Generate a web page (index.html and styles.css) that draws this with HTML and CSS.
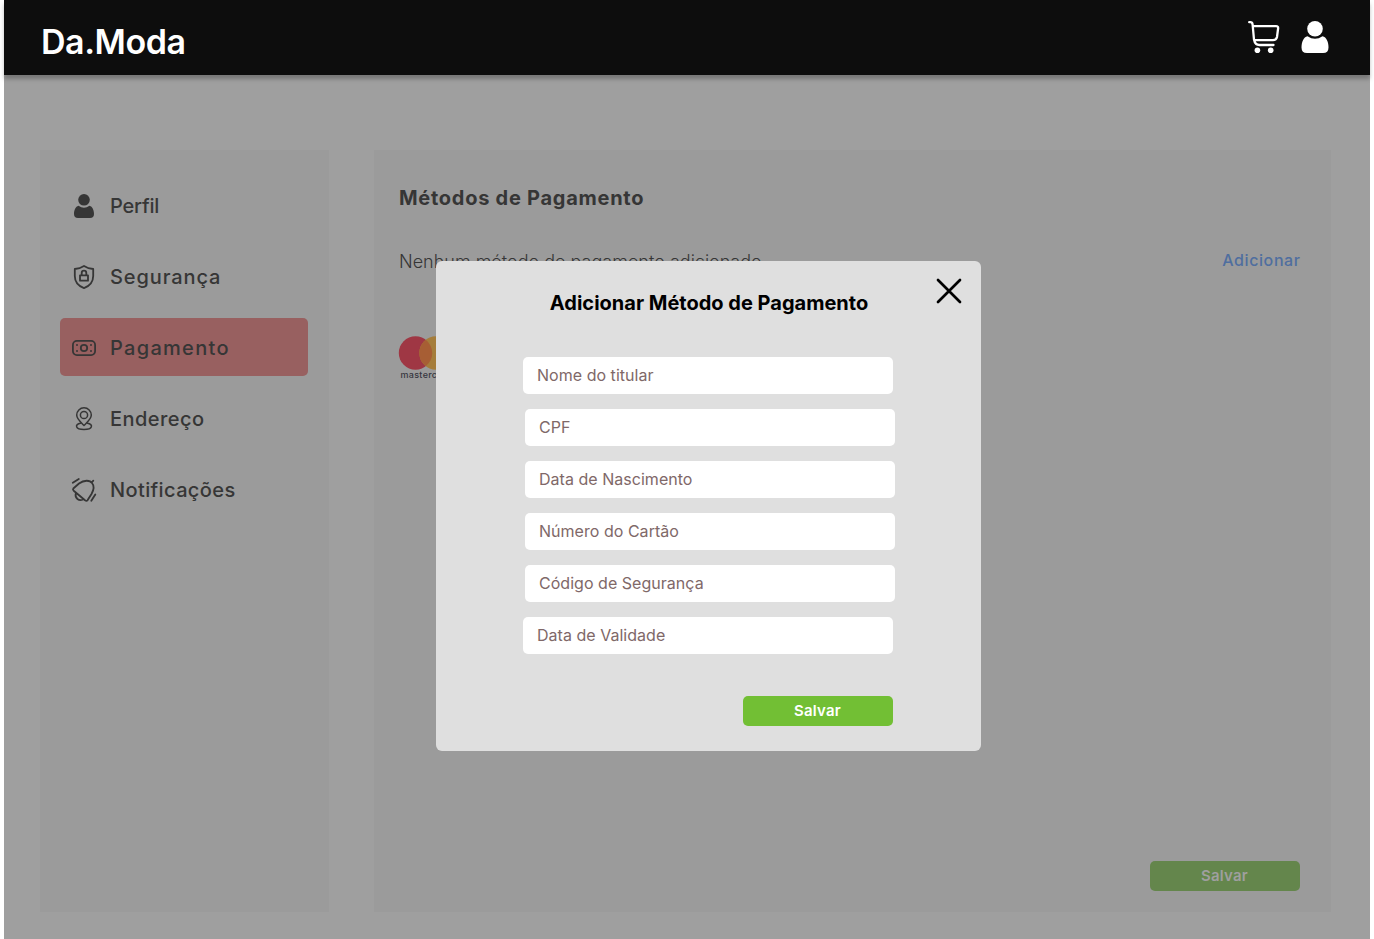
FILE: index.html
```html
<!DOCTYPE html>
<html lang="pt-BR">
<head>
<meta charset="utf-8">
<title>Da.Moda</title>
<link rel="stylesheet" href="styles.css">
</head>
<body>
<div class="page">
  <header class="topbar">
    <div class="logo">Da.Moda</div>
    <div class="actions">
      <svg class="cart" viewBox="0 0 32 33" width="32" height="33" fill="none" stroke="#fff" stroke-width="2.300" stroke-linecap="round" stroke-linejoin="round"><path d="M1.200 2.200H2.300Q4.300 2.200 4.600 4.500L6 19.500Q7 25 11.500 25H25.500M5.500 6.200H28Q30.500 6.200 30.100 8.500L29 17Q28.300 20.200 25 20.200H7"/><circle cx="9.400" cy="30.200" r="2.800" fill="#fff" stroke="none"/><circle cx="22.700" cy="30.200" r="2.800" fill="#fff" stroke="none"/></svg>
      <svg class="user" viewBox="0 0 28 33" width="28" height="33" fill="#fff"><circle cx="14" cy="8.700" r="7.800"/><path d="M6.500 16.200Q14 21.500 21.500 16.200C25.500 17 27.500 22 27.500 27.500Q27.500 33 22 33H6Q.5 33 .5 27.500C.5 22 2.500 17 6.500 16.200Z"/></svg>
    </div>
  </header>
  <main class="content">
    <nav class="sidebar">
      <a class="item"><svg viewBox="0 0 24 24" width="24" height="24" fill="#363636"><circle cx="12" cy="5.800" r="5.800"/><path d="M6.500 11.700Q12 15.800 17.500 11.700C20.500 12.500 22 16 22 20Q22 24 18 24H6Q2 24 2 20C2 16 3.500 12.500 6.500 11.700Z"/></svg><span class="t-perfil">Perfil</span></a>
      <a class="item"><svg viewBox="0 0 24 24" width="24" height="24" class="line"><path d="M12 1C9 3 6 3.700 2.800 4V11C2.800 17 6 20.800 12 23.200C18 20.800 21.200 17 21.200 11V4C18 3.700 15 3 12 1Z"/><path d="M8 10.300H16V15.700H8ZM9.700 10V8A2.300 2.300 0 0 1 14.300 8V10"/></svg><span class="t-seg">Segurança</span></a>
      <a class="item active"><svg viewBox="0 0 24 24" width="24" height="24" class="line"><rect x=".9" y="4.900" width="22.200" height="14.200" rx="4"/><circle cx="12" cy="12" r="3.200"/><g fill="#363636" stroke="none"><circle cx="5" cy="9" r="1"/><circle cx="5" cy="15" r="1"/><circle cx="19" cy="9" r="1"/><circle cx="19" cy="15" r="1"/></g></svg><span class="t-pag">Pagamento</span></a>
      <a class="item"><svg viewBox="0 0 24 24" width="24" height="24" class="line thin"><path d="M12 18.500C9 15.500 4.700 12 4.700 8.100A7.300 7.300 0 0 1 19.300 8.100C19.300 12 15 15.500 12 18.500Z"/><circle cx="12" cy="8" r="3.600"/><path d="M8.500 16.300C2.500 17.200 3 22.500 12 22.500S21.500 17.200 15.500 16.300"/></svg><span class="t-end">Endereço</span></a>
      <a class="item"><svg viewBox="0 0 24 24" width="24" height="24" class="line"><path d="M1.300 10.500L7 5.500C12 1.800 18 2 20 5C22.500 8 21.800 12 19.500 16L15.500 22.300Q14.500 23.300 13 22.300L1.700 12.700Q.5 11.500 1.300 10.500ZM19.700 4.500L21.300 2.700M3.800 15.500C2.500 20 7 23.500 11 21.500M.8 4.800L6.800 1M19.300 22.800L23.300 16.500"/></svg><span class="t-not">Notificações</span></a>
    </nav>
    <section class="panel">
      <h1>Métodos de Pagamento</h1>
      <div class="row"><p>Nenhum método de pagamento adicionado</p><a class="add">Adicionar</a></div>
      <svg class="mc" viewBox="0 0 60 48" width="60" height="48"><circle cx="16.500" cy="17" r="16.700" fill="#9f3744"/><circle cx="37" cy="17" r="16.700" fill="#a57d3b"/><path d="M26.750 3.800A16.700 16.700 0 0 1 26.750 30.200A16.700 16.700 0 0 1 26.750 3.800Z" fill="#a75e34"/><text x="1.500" y="42" class="mct">mastercard</text></svg>
      <button class="save">Salvar</button>
    </section>
  </main>
  <div class="modal">
    <svg class="close" viewBox="0 0 26 26" width="26" height="26"><path d="M2 2L24 24M24 2L2 24"/></svg>
    <h2>Adicionar Método de Pagamento</h2>
    <form class="form">
      <div class="field edge">Nome do titular</div>
      <div class="field">CPF</div>
      <div class="field">Data de Nascimento</div>
      <div class="field">Número do Cartão</div>
      <div class="field">Código de Segurança</div>
      <div class="field edge">Data de Validade</div>
    </form>
    <button class="save">Salvar</button>
  </div>
</div>
</body>
</html>
```
FILE: styles.css
```css
* { box-sizing: border-box; }
body { margin: 0; background: #fff; font-family: Inter, "Liberation Sans", sans-serif; overflow: hidden; }
h1, h2, p { margin: 0; }
.page { position: relative; margin: 0 4px; height: 939px; background: #9f9f9f; display: flex; flex-direction: column; }
.topbar { position: relative; height: 75px; flex: none; background: #0d0d0d; box-shadow: 0 4px 4px rgba(0,0,0,.25); display: flex; justify-content: space-between; padding: 0 41px 0 37px; }
.logo { color: #fff; font-size: 34px; font-weight: 600; line-height: 40px; padding-top: 22px; letter-spacing: -.45px; white-space: nowrap; }
.actions { display: flex; gap: 21px; padding-top: 20px; }
.content { display: flex; gap: 45px; padding: 75px 39px 27px 36px; flex: 1; }
.sidebar { width: 289px; background: #9b9b9b; padding: 26px 21px 0 20px; display: flex; flex-direction: column; gap: 13px; }
.item { height: 58px; display: flex; align-items: center; gap: 14px; padding: 2px 0 0 12px; border-radius: 5px; color: #363636; font-size: 20px; font-weight: 500; white-space: nowrap; }
.item svg { overflow: visible; flex: none; }
.active { background: #986060; }
.t-perfil { letter-spacing: -.2px; }
.t-seg { letter-spacing: .9px; }
.t-pag { letter-spacing: 1.3px; }
.t-end { letter-spacing: .45px; }
.t-not { letter-spacing: .38px; }
.line { fill: none; stroke: #363636; stroke-width: 1.8; stroke-linecap: round; stroke-linejoin: round; }
.thin { stroke-width: 1.5; }
.panel { flex: 1; background: #9b9b9b; padding: 33px 31px 21px 25px; display: flex; flex-direction: column; color: #363636; }
h1 { font-size: 20px; line-height: 30px; font-weight: 700; letter-spacing: .73px; white-space: nowrap; }
.row { display: flex; justify-content: space-between; margin-top: 35px; line-height: 26px; white-space: nowrap; }
.row p { font-size: 18px; font-weight: 300; padding-top: 1px; }
.add { font-size: 16px; font-weight: 500; letter-spacing: .6px; margin-right: -.6px; color: #4f6e9f; line-height: 25px; }
.mc { margin-top: 61px; flex: none; overflow: visible; }
.mct { font-size: 9px; font-weight: 500; fill: #363640; letter-spacing: .3px; }
.save { border: 0; border-radius: 5px; width: 150px; height: 30px; padding: 0 1px 0 0; font: 600 15px/30px Inter, sans-serif; letter-spacing: .2px; background: #72bf34; color: #fff; }
.panel .save { margin: auto 0 0 auto; background: #64864c; color: #9f9f9f; }
.modal { position: absolute; left: 432px; top: 261px; width: 545px; height: 490px; background: #dfdfdf; border-radius: 6px; padding: 27px 86px 25px 87px; display: flex; flex-direction: column; }
.modal h2 { font-size: 20px; line-height: 30px; font-weight: 700; color: #000; text-align: center; white-space: nowrap; }
.close { position: absolute; right: 19px; top: 17px; stroke: #000; stroke-width: 2.7; stroke-linecap: round; }
.form { display: flex; flex-direction: column; gap: 15px; margin-top: 39px; }
.field { width: 370px; height: 37px; margin-left: 2px; padding-left: 14px; border-radius: 5px; background: #fff; color: #806868; font-size: 16px; line-height: 37px; letter-spacing: .03px; white-space: nowrap; }
.edge { margin-left: 0; }
.modal .save { margin: auto 2px 0 auto; }
```
